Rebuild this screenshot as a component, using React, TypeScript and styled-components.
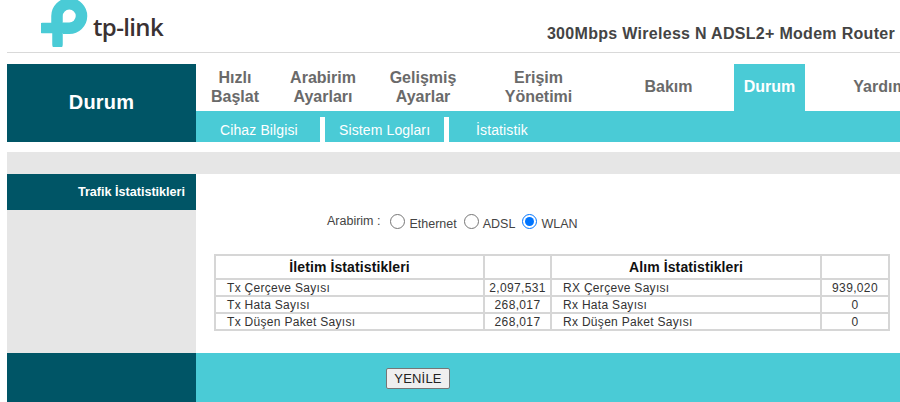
import styled, { createGlobalStyle } from "styled-components";

const GlobalStyle = createGlobalStyle`
  * { box-sizing: border-box; }
  html, body {
    margin: 0;
    padding: 0;
    width: 900px;
    height: 402px;
    overflow: hidden;
    background: #fff;
    font-family: "Liberation Sans", Arial, sans-serif;
  }
`;

const Page = styled.div`
  width: 900px;
  height: 402px;
  padding-left: 7px;
  overflow: hidden;
`;

const Header = styled.header`
  height: 53px;
  border-bottom: 1px solid #d9d9d9;
  display: flex;
  justify-content: space-between;
  align-items: flex-end;
  margin-bottom: 11px;
`;

const Logo = styled.div`
  display: flex;
  align-items: flex-start;
  padding-left: 34px;
  height: 52px;
`;

const LogoText = styled.span`
  font-family: "Open Sans", sans-serif;
  font-size: 24px;
  font-weight: 600;
  line-height: 30px;
  letter-spacing: -0.65px;
  color: #3a3233;
  margin: 12px 0 0 5px;
`;

const ModelName = styled.div`
  font-size: 16px;
  font-weight: 700;
  line-height: 18px;
  letter-spacing: 0.3px;
  color: #444;
  padding: 0 5px 9px 0;
`;

const NavArea = styled.div`
  display: flex;
  height: 78px;
  margin-bottom: 10px;
`;

const PageTitle = styled.div`
  flex: 0 0 189px;
  background: #005566;
  color: #fff;
  font-size: 20px;
  font-weight: 700;
  letter-spacing: 0.2px;
  padding-bottom: 2px;
  display: flex;
  align-items: center;
  justify-content: center;
`;

const NavColumn = styled.div`
  flex: 1;
  min-width: 0;
  display: flex;
  flex-direction: column;
`;

const MainNav = styled.nav`
  display: flex;
  height: 47px;
`;

const NavItem = styled.div<{ $width: number; $active?: boolean }>`
  flex: 0 0 ${(p) => p.$width}px;
  display: flex;
  align-items: center;
  justify-content: center;
  text-align: center;
  padding-bottom: 2px;
  font-size: 16px;
  font-weight: 700;
  line-height: 19px;
  color: ${(p) => (p.$active ? "#fff" : "#6a6a6a")};
  background: ${(p) => (p.$active ? "#4acbd6" : "transparent")};
`;

const SubNav = styled.div`
  flex: 1;
  display: flex;
  background: #4acbd6;
  padding-left: 24px;
`;

const SubNavItem = styled.div<{ $width: number }>`
  flex: 0 0 ${(p) => p.$width}px;
  color: #fff;
  font-size: 14px;
  letter-spacing: 0.12px;
  padding-top: 6px;
  display: flex;
  align-items: center;
`;

const SubNavDivider = styled.div<{ $after: number }>`
  flex: 0 0 5px;
  margin: 6px ${(p) => p.$after}px 0 0;
  background: #fff;
`;

const GrayStrip = styled.div`
  height: 22px;
  background: #e6e6e6;
`;

const Body = styled.div`
  display: flex;
  height: 179px;
`;

const Sidebar = styled.aside`
  flex: 0 0 189px;
  background: #e6e6e6;
`;

const SidebarItem = styled.div`
  height: 36px;
  background: #005566;
  color: #fff;
  font-size: 12.6px;
  font-weight: 700;
  line-height: 36px;
  text-align: right;
  padding-right: 11px;
`;

const Content = styled.main`
  flex: 1;
  min-width: 0;
  padding-left: 18px;
`;

const RadioRow = styled.div`
  display: flex;
  align-items: center;
  height: 24px;
  margin: 38px 0 18px;
  padding-left: 113px;
  font-size: 12.5px;
  color: #444;
`;

const RadioLabel = styled.span`
  margin-right: 10px;
  padding-bottom: 6px;
`;

const RadioOption = styled.label`
  display: flex;
  align-items: center;
  margin-right: 7px;
`;

const Radio = styled.input`
  width: 15px;
  height: 15px;
  margin: 0 4px 5px 0;
`;

const StatsTable = styled.table`
  width: 674px;
  border-collapse: collapse;
  table-layout: fixed;
  border: 2px solid #d6d6d6;
  font-size: 12px;
  color: #333;
  letter-spacing: 0.3px;
`;

const HeadCell = styled.th`
  height: 24px;
  padding: 0;
  border: 2px solid #d6d6d6;
  font-size: 14px;
  color: #111;
  text-align: center;
  letter-spacing: 0.1px;
`;

const LabelCell = styled.td`
  height: 17px;
  padding: 0 0 0 11px;
  border: 2px solid #d6d6d6;
  line-height: 14px;
`;

const ValueCell = styled.td`
  height: 17px;
  padding: 0;
  border: 2px solid #d6d6d6;
  text-align: center;
  line-height: 14px;
  letter-spacing: 0.35px;
`;

const FooterBar = styled.footer`
  display: flex;
  height: 49px;
`;

const FooterSide = styled.div`
  flex: 0 0 189px;
  background: #005566;
`;

const FooterMain = styled.div`
  flex: 1;
  background: #4acbd6;
  padding: 15px 0 0 190px;
`;

const RefreshButton = styled.button`
  width: 64px;
  height: 21px;
  padding: 0;
  border: 1px solid #767676;
  border-radius: 2px;
  background: #efefef;
  color: #222;
  font-family: "Liberation Sans", Arial, sans-serif;
  font-size: 13px;
  letter-spacing: 0.2px;
`;

const navItems = [
  { label: ["Hızlı", "Başlat"], width: 78 },
  { label: ["Arabirim", "Ayarları"], width: 98 },
  { label: ["Gelişmiş", "Ayarlar"], width: 102 },
  { label: ["Erişim", "Yönetimi"], width: 129 },
  { label: ["Bakım"], width: 131 },
  { label: ["Durum"], width: 71, active: true },
  { label: ["Yardım"], width: 150 },
];

const rows = [
  ["Tx Çerçeve Sayısı", "2,097,531", "RX Çerçeve Sayısı", "939,020"],
  ["Tx Hata Sayısı", "268,017", "Rx Hata Sayısı", "0"],
  ["Tx Düşen Paket Sayısı", "268,017", "Rx Düşen Paket Sayısı", "0"],
];

function LogoMark() {
  return (
    <svg width="47" height="47" viewBox="41 0 47 47" fill="none">
      <path
        d="M57 28V16A12.25 12.25 0 1 1 69 28.25H63"
        stroke="#4acbd6"
        strokeWidth="11.5"
      />
      <path
        d="M42.5 28H62.5M57.5 28V44.5"
        stroke="#4acbd6"
        strokeWidth="10.5"
        strokeLinecap="round"
        strokeLinejoin="round"
      />
    </svg>
  );
}

export default function App() {
  return (
    <>
      <GlobalStyle />
      <Page>
        <Header>
          <Logo>
            <LogoMark />
            <LogoText>tp-link</LogoText>
          </Logo>
          <ModelName>300Mbps Wireless N ADSL2+ Modem Router</ModelName>
        </Header>
        <NavArea>
          <PageTitle>Durum</PageTitle>
          <NavColumn>
            <MainNav>
              {navItems.map((item) => (
                <NavItem key={item.label[0]} $width={item.width} $active={item.active}>
                  <span>
                    {item.label[0]}
                    {item.label[1] && <br />}
                    {item.label[1]}
                  </span>
                </NavItem>
              ))}
            </MainNav>
            <SubNav>
              <SubNavItem $width={100}>Cihaz Bilgisi</SubNavItem>
              <SubNavDivider $after={14} />
              <SubNavItem $width={105}>Sistem Logları</SubNavItem>
              <SubNavDivider $after={27} />
              <SubNavItem $width={120}>İstatistik</SubNavItem>
            </SubNav>
          </NavColumn>
        </NavArea>
        <GrayStrip />
        <Body>
          <Sidebar>
            <SidebarItem>Trafik İstatistikleri</SidebarItem>
          </Sidebar>
          <Content>
            <RadioRow>
              <RadioLabel>Arabirim :</RadioLabel>
              <RadioOption>
                <Radio type="radio" name="iface" />
                Ethernet
              </RadioOption>
              <RadioOption>
                <Radio type="radio" name="iface" />
                ADSL
              </RadioOption>
              <RadioOption>
                <Radio type="radio" name="iface" defaultChecked />
                WLAN
              </RadioOption>
            </RadioRow>
            <StatsTable>
              <colgroup>
                <col style={{ width: 269 }} />
                <col style={{ width: 67 }} />
                <col style={{ width: 270 }} />
                <col style={{ width: 68 }} />
              </colgroup>
              <thead>
                <tr>
                  <HeadCell>İletim İstatistikleri</HeadCell>
                  <HeadCell />
                  <HeadCell>Alım İstatistikleri</HeadCell>
                  <HeadCell />
                </tr>
              </thead>
              <tbody>
                {rows.map((row) => (
                  <tr key={row[0]}>
                    <LabelCell>{row[0]}</LabelCell>
                    <ValueCell>{row[1]}</ValueCell>
                    <LabelCell>{row[2]}</LabelCell>
                    <ValueCell>{row[3]}</ValueCell>
                  </tr>
                ))}
              </tbody>
            </StatsTable>
          </Content>
        </Body>
        <FooterBar>
          <FooterSide />
          <FooterMain>
            <RefreshButton type="button">YENİLE</RefreshButton>
          </FooterMain>
        </FooterBar>
      </Page>
    </>
  );
}
